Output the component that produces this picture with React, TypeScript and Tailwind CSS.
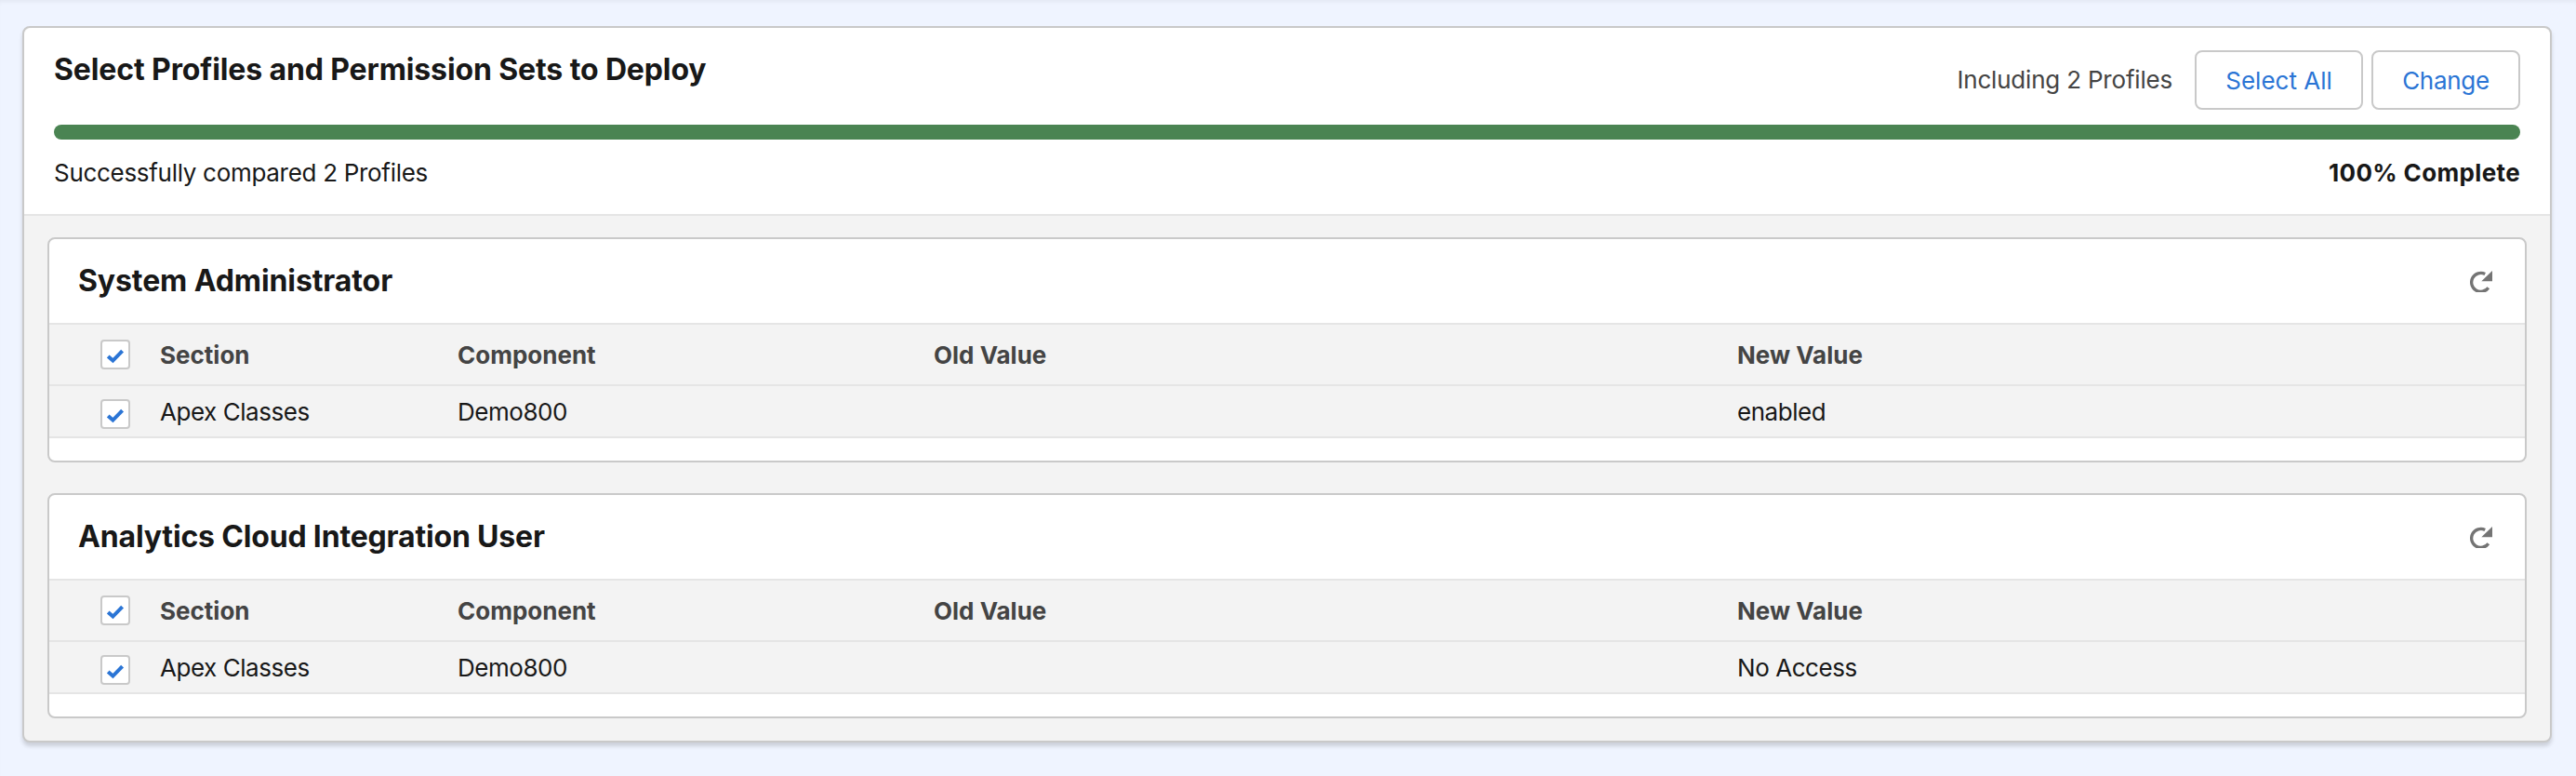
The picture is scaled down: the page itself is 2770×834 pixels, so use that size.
const font = { fontFamily: "Inter, 'Liberation Sans', sans-serif" };

function Check({ down }: { down?: boolean }) {
  return (
    <span className={`flex h-[32px] w-[32px] shrink-0 rounded-[4px] border-2 border-[#c9c9c9] bg-white ${down ? "mt-[4px]" : ""}`}>
      <svg width="28" height="28" viewBox="0 0 28 28" fill="none">
        <path d="M6.2 16 L11.4 20.6 L21.6 10.2" stroke="#2b75d5" strokeWidth="4" />
      </svg>
    </span>
  );
}

function Refresh() {
  return (
    <svg width="24" height="23" viewBox="0 0 24 23" fill="none">
      <path d="M16.2 3.5 A10 10 0 1 0 19.8 18.2" stroke="#747474" strokeWidth="3.3" />
      <path d="M24 0 V11.3 H12.3 Z" fill="#747474" />
    </svg>
  );
}

function Row({ head, section, component, oldValue, newValue }: { head?: boolean; section: string; component: string; oldValue: string; newValue: string }) {
  const text = head ? "font-bold text-[#444444]" : "font-normal text-[#181818] tracking-[-0.45px] pt-[1px]";
  return (
    <div className={`flex items-center border-[#e5e5e5] pl-[55px] text-[26px] ${head ? "h-[66px] border-t-2" : "h-[58px] border-t-2 border-b-2"} ${text}`}>
      <Check down={!head} />
      <div className="ml-[32px] w-[320px]">{section}</div>
      <div className="w-[512px]">{component}</div>
      <div className="w-[864px]">{oldValue}</div>
      <div>{newValue}</div>
    </div>
  );
}

function ProfileCard({ title, value, tracking }: { title: string; value: string; tracking: string }) {
  return (
    <section className="h-[242px] rounded-[8px] border-2 border-[#c9c9c9] bg-white">
      <div className="flex h-[90px] items-center justify-between pl-[31px] pr-[35px]">
        <h2 className={`text-[32px] font-bold text-[#181818] ${tracking}`}>{title}</h2>
        <Refresh />
      </div>
      <div className="bg-[#f3f3f3]">
        <Row head section="Section" component="Component" oldValue="Old Value" newValue="New Value" />
        <Row section="Apex Classes" component="Demo800" oldValue="" newValue={value} />
      </div>
    </section>
  );
}

export default function App() {
  return (
    <div style={font} className="h-[834px] w-[2770px] overflow-hidden bg-[#eff4ff] pl-[24px] pr-[26px] pt-[28px] shadow-[inset_0_4px_4px_-2px_rgba(0,0,0,0.05)]">
      <main className="h-[770px] rounded-[8px] border-2 border-[#c9c9c9] bg-[#f3f3f3] shadow-[0_4px_4px_0_rgba(0,0,0,0.15)]">
        <header className="h-[202px] rounded-t-[8px] border-b-2 border-[#e5e5e5] bg-white px-[32px]">
          <div className="flex h-[104px] justify-between">
            <h1 className="pt-[24px] text-[32px] font-bold leading-[42px] tracking-[-0.12px] text-[#181818]">Select Profiles and Permission Sets to Deploy</h1>
            <div className="flex items-start pt-[24px]">
              <span className="mr-[24px] h-[64px] text-[26px] leading-[64px] tracking-[-0.2px] text-[#444444]">Including 2 Profiles</span>
              <button className="h-[64px] w-[181px] rounded-[8px] border-2 border-[#c9c9c9] bg-white text-[26px] text-[#2b75d5]">Select All</button>
              <button className="ml-[9px] h-[64px] w-[160px] rounded-[8px] border-2 border-[#c9c9c9] bg-white text-[26px] tracking-[-0.3px] text-[#2b75d5]">Change</button>
            </div>
          </div>
          <div className="h-[16px] rounded-full bg-[#4a8452]" />
          <div className="mt-[20px] flex justify-between text-[26px] leading-[32px] text-[#181818]">
            <span className="tracking-[-0.3px]">Successfully compared 2 Profiles</span>
            <span className="font-bold tracking-[0.35px]">100% Complete</span>
          </div>
        </header>
        <div className="flex flex-col gap-[33px] pl-[25px] pr-[25px] pt-[23px]">
          <ProfileCard title="System Administrator" value="enabled" tracking="tracking-[-0.1px]" />
          <ProfileCard title="Analytics Cloud Integration User" value="No Access" tracking="tracking-[-0.17px]" />
        </div>
      </main>
    </div>
  );
}
